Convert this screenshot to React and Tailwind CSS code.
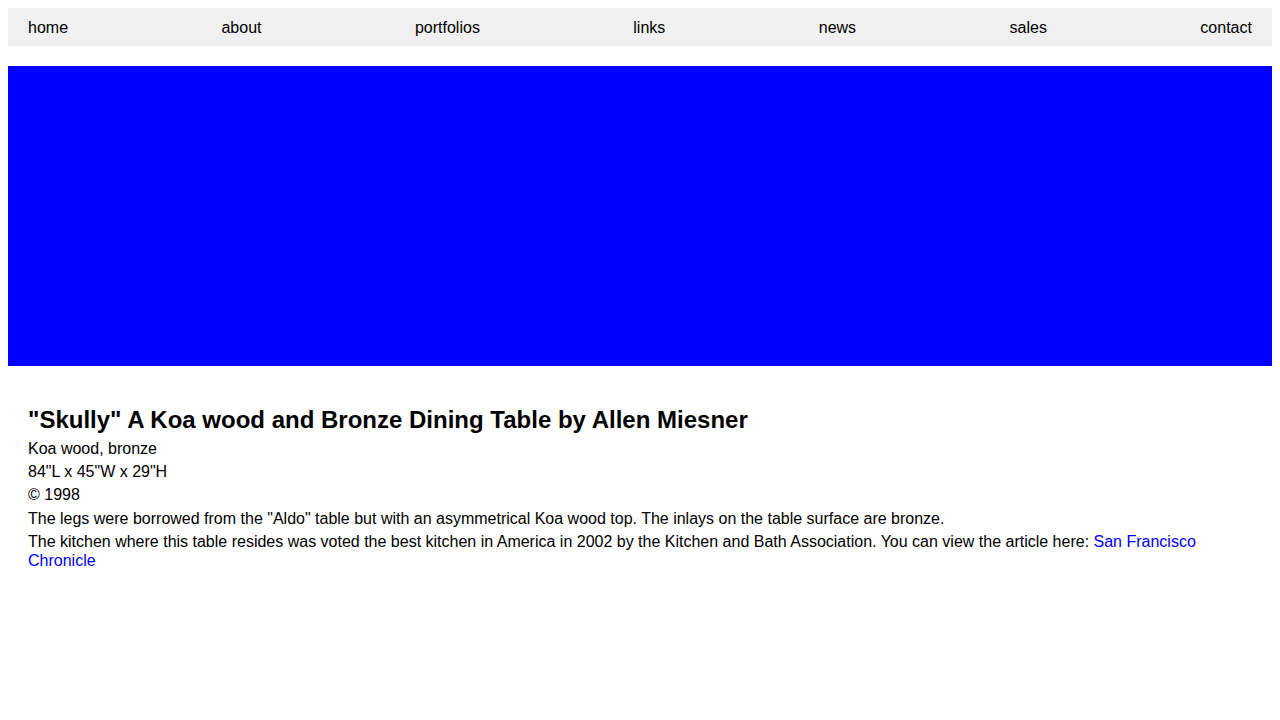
import React from 'react';

const NAV = ['home', 'about', 'portfolios', 'links', 'news', 'sales', 'contact'];

const App = () => {
    return (
        <div className="p-2 bg-white text-black text-[16px] leading-[normal]" style={{ fontFamily: '"Liberation Sans", Arial, sans-serif' }}>
            {/* Top navigation */}
            <nav className="flex items-center justify-between pt-[11px] pb-[9px] px-5 bg-[#f0f0f0]">
                {NAV.map((item) => (
                    <a key={item} href="#" className="text-black">{item}</a>
                ))}
            </nav>

            {/* Image placeholder */}
            <div className="mt-5 h-[300px] bg-[#0000ff]" />

            {/* Description */}
            <section className="mt-5 p-5 flex flex-col gap-[4px] leading-[1.2]">
                <h1 className="text-[24px] font-bold leading-[normal] mb-[1px]">"Skully" A Koa wood and Bronze Dining Table by Allen Miesner</h1>
                <p>Koa wood, bronze</p>
                <p>84"L x 45"W x 29"H</p>
                <p>© 1998</p>
                <p>The legs were borrowed from the "Aldo" table but with an asymmetrical Koa wood top. The inlays on the table surface are bronze.</p>
                <p>
                    The kitchen where this table resides was voted the best kitchen in America in 2002 by the Kitchen and Bath Association. You can view the article here:{' '}
                    <a href="#" className="text-[#0000ff]">San Francisco Chronicle</a>
                </p>
            </section>
        </div>
    );
};

export default App;
